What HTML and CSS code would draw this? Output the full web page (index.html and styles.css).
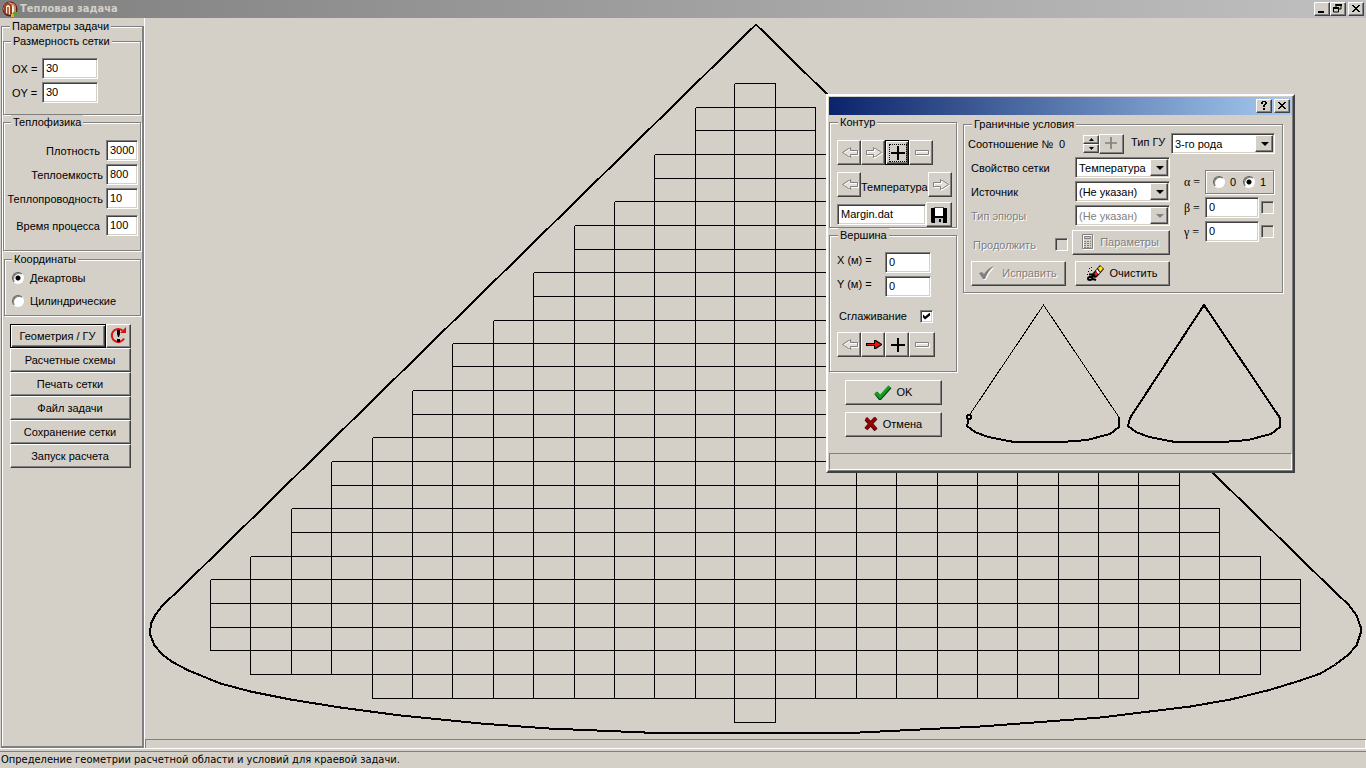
FILE: index.html
```html
<!DOCTYPE html>
<html lang="ru">
<head>
<meta charset="utf-8">
<title>Тепловая задача</title>
<link rel="stylesheet" href="styles.css">
</head>
<body>
<svg class="defs" aria-hidden="true">
  <defs>
    <symbol id="arrow-left" viewBox="0 0 17 12"><path class="etch-light" d="M8.500 1.500V4.500H16.500V8.500H8.500V10.500L1.500 6.500Z"/><path class="etch-dark" d="M8.500 .5L7.500 1.500H6.500L.5 5.500L6.500 9.500H7.500L8.500 10.500V7.500H15.500V3.500H8.500Z"/></symbol>
    <symbol id="arrow-right" viewBox="0 0 17 12"><path class="etch-light" d="M8.500 1.500V4.500H1.500V8.500H8.500V11.500L16.500 6.500Z"/><path class="etch-dark" d="M7.500 .5L8.500 1.500H9.500L15.500 5.500L9.500 9.500H8.500L7.500 10.500V7.500H.5V3.500H7.500Z"/></symbol>
    <symbol id="plus" viewBox="0 0 14 14"><path d="M6 0h2v6h6v2H8v6H6V8H0V6h6z"/></symbol>
    <symbol id="minus" viewBox="0 0 15 6"><path class="etch-light" d="M1.500 1.500H14.500V5.500H1.500Z"/><path class="etch-dark" d="M.5 .5H13.500V4.500H.5Z"/></symbol>
    <symbol id="close" viewBox="0 0 8 7"><path d="M0 0h2v1h1v1h2V1h1V0h2v1H7v1H6v1H5v1h1v1h1v1h1v1H6V6H5V5H3v1H2v1H0V6h1V5h1V4h1V3H2V2H1V1H0z"/></symbol>
  </defs>
</svg>

<header class="titlebar">
  <svg class="app-icon" viewBox="0 0 16 16" aria-hidden="true"><circle cx="8" cy="8" r="7.500" fill="#6b1a10"/><circle cx="7.500" cy="7.500" r="6" fill="#f5e8dc"/><path d="M3 12V6q0-3 3-3t3 3v7" fill="none" stroke="#9b3b22" stroke-width="2"/><path d="M6 6v7" stroke="#b06a40" stroke-width="2"/><path d="M9 3q4 0 4 4v4" fill="none" stroke="#c08a60" stroke-width="2"/><rect x="11" y="11" width="4" height="4" fill="#5aa03c"/><rect x="9" y="13" width="3" height="3" fill="#e0b020"/></svg>
  <h1 class="title-text">Тепловая задача</h1>
  <div class="window-buttons">
    <button class="caption-btn" aria-label="Свернуть"><svg width="8" height="8" viewBox="0 0 8 8"><path d="M0 6h6v2H0z"/></svg></button>
    <button class="caption-btn" aria-label="Восстановить"><svg width="9" height="9" viewBox="0 0 9 9"><path d="M3 1h5v4H6M3 0v3M.5 4h5v4h-5z" fill="none" stroke="#000"/><path d="M2.500 0H9v2H2.500zM0 3h6v2H0z"/></svg></button>
    <button class="caption-btn caption-close" aria-label="Закрыть"><svg width="8" height="7"><use href="#close"/></svg></button>
  </div>
</header>

<div class="workspace">
  <aside class="sidebar">
    <fieldset class="group params">
      <legend>Параметры задачи</legend>
      <fieldset class="group grid-size">
        <legend>Размерность сетки</legend>
        <div class="axis"><label for="ox">OX =</label><input id="ox" class="box" value="30"></div>
        <div class="axis"><label for="oy">OY =</label><input id="oy" class="box" value="30"></div>
      </fieldset>
      <fieldset class="group physics">
        <legend>Теплофизика</legend>
        <div class="prop"><label for="dens">Плотность&nbsp;</label><input id="dens" class="box" value="3000"></div>
        <div class="prop"><label for="cap">Теплоемкость</label><input id="cap" class="box" value="800"></div>
        <div class="prop"><label for="cond">Теплопроводность</label><input id="cond" class="box" value="10"></div>
        <div class="prop prop-time"><label for="time">Время процесса&nbsp;</label><input id="time" class="box" value="100"></div>
      </fieldset>
      <fieldset class="group coords">
        <legend>Координаты</legend>
        <label class="radio-row"><input type="radio" name="coord" class="radio" checked>Декартовы</label>
        <label class="radio-row"><input type="radio" name="coord" class="radio">Цилиндрические</label>
      </fieldset>
      <div class="commands">
        <div class="command-pair">
          <button class="btn btn-default">Геометрия / ГУ</button>
          <button class="btn refresh" aria-label="Обновить"><svg width="17" height="17" viewBox="0 0 17 17"><path d="M12.500 3.500A6.500 6.500 0 1 0 14 11.500" fill="none" stroke="#e01010" stroke-width="2"/><path d="M10 6h6V0z" fill="#e01010"/><path d="M7 3h3v4L9 10H8L7 7zM7 12h3v3H7z"/></svg></button>
        </div>
        <button class="btn">Расчетные схемы</button>
        <button class="btn">Печать сетки</button>
        <button class="btn">Файл задачи</button>
        <button class="btn">Сохранение сетки</button>
        <button class="btn">Запуск расчета</button>
      </div>
    </fieldset>
  </aside>

  <main class="main">
    <svg class="mesh" viewBox="144.500 17.500 1221 721" preserveAspectRatio="none" role="img" aria-label="Расчетная сетка">
      <path class="mesh-line" d="M210 579V650M250 556V674M291 508V674M331 461V674M372 437V698M412 390V698M452 343V698M493 320V698M533 272V698M574 225V698M614 201V698M654 154V698M695 107V698M734 83V722M775 83V722M815 107V698M856 154V698M896 201V698M937 225V698M977 272V698M1017 320V698M1058 343V698M1098 390V698M1138 437V698M1179 461V674M1219 508V674M1260 556V674M1300 579V650"/>
      <path class="mesh-line" d="M734 83H775M695 107H815M695 130H815M654 154H856M654 178H856M614 201H896M574 225H937M574 249H937M533 272H977M533 296H977M493 320H1017M452 343H1058M452 366H1058M412 390H1098M412 414H1098M372 437H1138M331 461H1179M331 485H1179M291 508H1219M291 532H1219M250 556H1260M210 579H1300M210 603H1300M210 627H1300M210 650H1300M250 674H1260M372 698H1138M734 722H775"/>
      <path class="contour" d="M755.500 24L270 500L180 588L162 605L155 614L151 622L149.500 630L150 635L154 645L162 654L171 661L188 670L220 683L250 691L290 699L340 707L400 715L480 723L548 728L656 732.500H850L980 726L1060 720L1100 717L1190 706L1230 699L1267 690L1300 680L1320 673L1335 664L1347 655L1356 645L1360 633V626L1356 615L1348 604L1337 594L1213 473L755.500 24"/>
    </svg>
    <div class="canvas-panel"></div>
  </main>
</div>

<footer class="status">Определение геометрии расчетной области и условий для краевой задачи.</footer>

<section class="dialog" role="dialog" aria-label="Граничные условия">
  <header class="dialog-title">
    <button class="caption-btn" aria-label="Справка"><svg width="8" height="9" viewBox="0 0 8 9"><path d="M1 1h1V0h4v1h1v2H6v1H5v2H3V4h1V3h1V1H3v2H1zM3 7h2v2H3z"/></svg></button>
    <button class="caption-btn caption-close" aria-label="Закрыть"><svg width="8" height="7"><use href="#close"/></svg></button>
  </header>
  <div class="dialog-body">
    <div class="col-left">
      <fieldset class="group contour-group">
        <legend>Контур</legend>
        <div class="tools">
          <button class="btn tool" disabled aria-label="Назад"><svg width="17" height="12"><use href="#arrow-left"/></svg></button>
          <button class="btn tool" disabled aria-label="Вперед"><svg width="17" height="12"><use href="#arrow-right"/></svg></button>
          <button class="btn tool btn-default focused" aria-label="Добавить"><svg width="14" height="14"><use href="#plus"/></svg></button>
          <button class="btn tool" disabled aria-label="Удалить"><svg width="15" height="6"><use href="#minus"/></svg></button>
        </div>
        <div class="field-nav">
          <button class="btn tool" disabled aria-label="Предыдущее"><svg width="17" height="12"><use href="#arrow-left"/></svg></button>
          <span class="field-name">Температура</span>
          <button class="btn tool" disabled aria-label="Следующее"><svg width="17" height="12"><use href="#arrow-right"/></svg></button>
        </div>
        <div class="file-row">
          <input class="box" aria-label="Файл" value="Margin.dat">
          <button class="btn tool tool-wide" aria-label="Сохранить"><svg width="16" height="16" viewBox="0 0 16 16"><path d="M0 1h16v15H1L0 15z"/><path d="M4 1h8v8H4z" fill="#fff"/><path d="M3 0h10v1H3z" fill="#e02020"/><path d="M4 11h8v5H4z" fill="#c0c0c0"/><path d="M8 12h2v3H8z"/></svg></button>
        </div>
      </fieldset>
      <fieldset class="group vertex-group">
        <legend>Вершина</legend>
        <div class="vertex"><label for="vx">X (м) =</label><input id="vx" class="box" value="0"></div>
        <div class="vertex"><label for="vy">Y (м) =</label><input id="vy" class="box" value="0"></div>
        <label class="smooth">Сглаживание<input type="checkbox" class="check" checked></label>
        <div class="tools">
          <button class="btn tool" disabled aria-label="Назад"><svg width="17" height="12"><use href="#arrow-left"/></svg></button>
          <button class="btn tool" aria-label="Вперед"><svg width="17" height="12" viewBox="0 0 17 12"><path d="M0 4h8V1h2l6 4v1l-6 4H8V7H0z"/><path d="M1 5h8V2l6 3.500L9 9V6H1z" fill="#f01010"/></svg></button>
          <button class="btn tool" aria-label="Добавить"><svg width="14" height="14"><use href="#plus"/></svg></button>
          <button class="btn tool tool-wide" disabled aria-label="Удалить"><svg width="15" height="6"><use href="#minus"/></svg></button>
        </div>
      </fieldset>
      <div class="answers">
        <button class="btn answer"><svg width="18" height="15" viewBox="0 0 18 15"><path d="M2 8L6 13L16 2" fill="none" stroke="#003c14" stroke-width="4"/><path d="M1.500 7.500L6 12L15.500 1.500" fill="none" stroke="#12a020" stroke-width="3"/></svg>OK</button>
        <button class="btn answer"><svg width="14" height="14" viewBox="0 0 14 14"><path d="M2 2Q7 7 12 13M12 1Q7 6 2 12" fill="none" stroke="#500000" stroke-width="4"/><path d="M2 1Q7 6 12 12M12 1Q6 6 2 12" fill="none" stroke="#900408" stroke-width="3"/></svg>Отмена</button>
      </div>
    </div>

    <div class="col-right">
      <fieldset class="group boundary">
        <legend>Граничные условия</legend>
        <div class="ratio-row">
          <span class="ratio-label">Соотношение №</span><output class="ratio-value">0</output>
          <span class="spinner">
            <button class="btn spin" aria-label="Больше"><svg width="5" height="3" viewBox="0 0 5 3"><path d="M0 3h5L2.500 0z"/></svg></button>
            <button class="btn spin" aria-label="Меньше"><svg width="5" height="3" viewBox="0 0 5 3"><path d="M0 0h5L2.500 3z"/></svg></button>
          </span>
          <button class="btn add" disabled aria-label="Добавить"><svg class="gray" width="12" height="12"><use href="#plus"/></svg></button>
          <label class="type-label" for="bc">Тип ГУ</label>
          <span class="combo"><select id="bc"><option>3-го рода</option></select></span>
        </div>
        <div class="boundary-cols">
          <div class="sources">
            <div class="source"><label for="gridprop">Свойство сетки</label><span class="combo"><select id="gridprop"><option>Температура</option></select></span></div>
            <div class="source"><label for="src">Источник</label><span class="combo"><select id="src"><option>(Не указан)</option></select></span></div>
            <div class="source"><label class="off" for="epure">Тип эпюры</label><span class="combo combo-off"><select id="epure" disabled><option>(Не указан)</option></select></span></div>
            <div class="continue-row">
              <label class="off continue">Продолжить<input type="checkbox" class="check check-off" disabled></label>
              <button class="btn" disabled><svg width="12" height="16" viewBox="0 0 12 16"><path d="M1.500 1.500H11.500V15.500H1.500Z" fill="none" stroke="#fff"/><path d="M.5 .5H10.500V14.500H.5ZM2.500 2.500H8.500V4.500H2.500Z" fill="none" stroke="#808080"/><path d="M2 7h2v1H2zM5 7h2v1H5zM8 7h1v1H8zM2 9h2v1H2zM5 9h2v1H5zM8 9h1v1H8zM2 11h2v1H2zM5 11h2v1H5zM8 11h1v1H8zM2 13h2v1H2zM5 13h2v1H5zM8 13h1v1H8z" fill="#808080"/></svg>Параметры</button>
            </div>
            <div class="edit-row">
              <button class="btn" disabled><svg width="17" height="14" viewBox="0 0 17 14"><path d="M1 8L4 7L6 9Q10 3 16 1Q10 6 7 14H5Z" fill="#fff"/><path d="M0 7L3 6L5 8Q9 2 15 0Q9 5 6 13H4Z" fill="#808080"/></svg>Исправить</button>
              <button class="btn"><svg width="17" height="16" viewBox="0 0 17 16"><path d="M6 8L13 0L17 4L10 12L8 13L5 11Z"/><path d="M11 3L14 1L16 4L13 7Z" fill="#ffe020"/><path d="M10 4L13 8L11 9L9 6Z" fill="#fff"/><path d="M9 6L11 9L9 11L7 9Z" fill="#f01818"/><path d="M2 3h1v1H2zM4 2h1v1H4zM1 6h1v1H1zM4 5h1v1H4zM0 9h1v1H0z"/><path d="M2 9.500H5.500V15M5 12H3Q1 12 1 13.500T3 15L6 14L9 15" fill="none" stroke="#000" stroke-width="2"/></svg>Очистить</button>
            </div>
          </div>
          <div class="coeffs">
            <div class="coeff"><span class="greek">α =</span>
              <span class="alpha"><label><input type="radio" name="alpha" class="radio">0</label><label><input type="radio" name="alpha" class="radio" checked>1</label></span></div>
            <div class="coeff"><label class="greek" for="beta">β =</label><input id="beta" class="box" value="0"><input type="checkbox" class="check check-off" aria-label="β переменная"></div>
            <div class="coeff"><label class="greek" for="gamma">γ =</label><input id="gamma" class="box" value="0"><input type="checkbox" class="check check-off" aria-label="γ переменная"></div>
          </div>
        </div>
      </fieldset>
      <div class="previews">
        <svg viewBox="0 0 158 144" aria-label="Контур"><path class="thin" d="M5.500 114L79.500 4L155.500 117"/><path class="thick" d="M5 117L3 125L11 131L24 136L50 141H98L123 139L146 133L155 126V116"/><circle class="node" cx="5" cy="116" r="2"/></svg>
        <svg viewBox="0 0 158 144" aria-label="Область"><path class="thick" d="M79 4L5 117L3 125L11 131L24 136L50 141H98L123 139L146 133L155 126V117Z"/></svg>
      </div>
    </div>
  </div>
  <footer class="dialog-status"></footer>
</section>
</body>
</html>
```
FILE: styles.css
```css
* { box-sizing: border-box; }

body {
  margin: 0;
  min-height: 100vh;
  display: flex;
  flex-direction: column;
  position: relative;
  background: #d4d0c8;
  color: #000;
  font: 11px/14px "Liberation Sans", Arial, sans-serif;
  overflow: hidden;
}

button, input, select { font: inherit; color: inherit; margin: 0; }
svg { flex: none; }
.defs { position: absolute; width: 0; height: 0; }
.etch-light { fill: #e4e0d8; stroke: #fff; }
.etch-dark { fill: none; stroke: #808080; }

/* Window caption */
.titlebar {
  display: flex;
  align-items: center;
  height: 18px;
  padding: 0 2px;
  gap: 2px;
  background: linear-gradient(90deg, #808080, #c0c0c0);
}
.app-icon { width: 16px; height: 16px; }
.title-text {
  flex: 1;
  margin: 0;
  color: #d4d0c8;
  font: bold 11px/14px "DejaVu Sans Condensed", "DejaVu Sans", sans-serif;
}
.window-buttons { display: flex; }
.caption-btn {
  display: flex;
  align-items: center;
  justify-content: center;
  width: 16px;
  height: 14px;
  padding: 0 1px 1px 0;
  background: #d4d0c8;
  border: 1px solid;
  border-color: #fff #404040 #404040 #fff;
  box-shadow: inset -1px -1px 0 #808080;
}
.caption-close { margin-left: 2px; }

/* Shared controls */
.group {
  min-width: 0;
  margin: 0;
  padding: 0;
  border: 1px solid #808080;
  box-shadow: 1px 1px 0 #fff, inset 1px 1px 0 #fff;
}
.group > legend {
  margin-left: 7px;
  padding: 0 2px;
  background: #d4d0c8;
}
.box {
  width: 100%;
  min-width: 0;
  height: 21px;
  padding: 0 3px 2px;
  background: #fff;
  border: 1px solid;
  border-color: #808080 #fff #fff #808080;
  border-radius: 0;
  box-shadow: inset 1px 1px 0 #404040, inset -1px -1px 0 #d4d0c8;
  outline: 0;
}
.btn {
  display: flex;
  align-items: center;
  justify-content: center;
  height: 25px;
  padding: 0 1px 1px 0;
  white-space: nowrap;
  background: #d4d0c8;
  border: 1px solid;
  border-color: #fff #404040 #404040 #fff;
  border-radius: 0;
  box-shadow: inset -1px -1px 0 #808080;
}
.btn:disabled, .off { color: #808080; text-shadow: 1px 1px 0 #fff; }
.btn-default {
  border-color: #000;
  box-shadow: inset 1px 1px 0 #fff, inset -1px -1px 0 #404040, inset -2px -2px 0 #808080;
}
.radio {
  appearance: none;
  width: 12px;
  height: 12px;
  border: 1px solid;
  border-color: #606060 #fff #fff #606060;
  border-radius: 50%;
  background: #fff;
  box-shadow: inset 1px 1px 0 #808080;
}
.radio:checked { background: radial-gradient(circle, #000 2px, #fff 3px); }
.check {
  appearance: none;
  display: grid;
  place-items: center;
  width: 13px;
  height: 13px;
  background: #fff;
  border: 1px solid;
  border-color: #808080 #fff #fff #808080;
  box-shadow: inset 1px 1px 0 #404040, inset -1px -1px 0 #d4d0c8;
}
.check:checked::before {
  content: "";
  width: 7px;
  height: 7px;
  background: #000;
  clip-path: polygon(0 30%, 30% 58%, 100% 0, 100% 42%, 30% 100%, 0 72%);
}
.check-off { background: #d4d0c8; }
.combo { display: grid; min-width: 0; height: 21px; }
.combo::before, .combo::after { content: ""; grid-area: 1 / 1; z-index: 1; pointer-events: none; }
.combo::before {
  justify-self: end;
  width: 16px;
  margin: 2px;
  background: #d4d0c8;
  border: 1px solid;
  border-color: #fff #404040 #404040 #fff;
  box-shadow: inset -1px -1px 0 #808080;
}
.combo::after {
  place-self: center end;
  margin-right: 6px;
  border: solid transparent;
  border-width: 4px 4px 0;
  border-top-color: #000;
}
.combo-off::after { border-top-color: #808080; }
.combo select {
  grid-area: 1 / 1;
  appearance: none;
  width: 100%;
  min-width: 0;
  padding: 0 18px 0 3px;
  background: #fff;
  border: 1px solid;
  border-color: #808080 #fff #fff #808080;
  border-radius: 0;
  box-shadow: inset 1px 1px 0 #404040, inset -1px -1px 0 #d4d0c8;
  outline: 0;
}
.combo select:disabled { color: #808080; opacity: 1; }

/* Workspace */
.workspace { flex: 1; display: flex; border-bottom: 1px solid #fff; }
.sidebar { display: flex; flex: none; width: 144px; padding: 1px 0 0 1px; }
.params { flex: 1; padding: 1px 1px 0; border-width: 1px 2px 2px 1px; box-shadow: inset 1px 1px 0 #fff; }

.grid-size { padding: 10px 0 11px; }
.axis { display: grid; grid-template-columns: 30px 56px; align-items: center; padding-left: 8px; }
.axis + .axis, .prop + .prop { margin-top: 3px; }
.physics { padding: 11px 2px 14px 0; }
.prop { display: grid; grid-template-columns: 1fr 32px; gap: 3px; align-items: center; text-align: right; white-space: nowrap; }
.physics .prop-time { margin-top: 6px; }
.coords { margin: 1px 0 0 1px; padding: 4px 0 6px 7px; }
.coords > legend { margin-left: 0; }
.radio-row { display: flex; align-items: center; gap: 6px; height: 16px; }
.radio-row + .radio-row { margin-top: 7px; }

.commands { padding: 8px 10px 0 7px; }
.commands .btn { width: 100%; height: 24px; }
.command-pair { display: grid; grid-template-columns: 1fr 25px; }

.main { flex: 1; display: flex; flex-direction: column; min-width: 0; border-left: 1px solid #fff; }
.mesh { flex: 1; min-height: 0; width: 100%; display: block; }
.mesh-line, .contour { fill: none; stroke: #000; vector-effect: non-scaling-stroke; shape-rendering: crispEdges; }
.contour { stroke-width: 2; }
.canvas-panel { height: 9px; border: solid #808080; border-width: 1px 0 0 1px; box-shadow: inset -1px 0 0 #fff; }

.status {
  height: 17px;
  margin-top: 2px;
  padding-left: 1px;
  border-top: 1px solid #808080;
  font: 11px/16px "DejaVu Sans Condensed", "DejaVu Sans", sans-serif;
}

/* Floating dialog */
.dialog {
  position: absolute;
  top: 94px;
  right: 71px;
  width: 469px;
  padding: 1px;
  background: #d4d0c8;
  border: 2px solid;
  border-color: #fff #404040 #404040 #fff;
  box-shadow: inset -1px -1px 0 #808080;
}
.dialog-title {
  display: flex;
  align-items: center;
  justify-content: flex-end;
  height: 18px;
  padding-right: 2px;
  background: linear-gradient(90deg, #0a246a, #a6caf0);
}
.dialog-body { display: flex; gap: 6px; padding-right: 9px; }
.dialog-status { height: 17px; border: 1px solid; border-color: #808080 #fff #fff #808080; }

.col-left { flex: none; width: 128px; padding-bottom: 16px; }
.contour-group { padding: 11px 4px 0 7px; }
.contour-group > legend, .vertex-group > legend { margin-left: 1px; }
.tools { display: flex; }
.tool { flex: none; width: 24px; padding: 1px 0 0 2px; }
.tool-wide { width: 26px; padding-left: 0; }
.focused svg { outline: 1px dotted #000; outline-offset: 1px; }
.field-nav { display: flex; align-items: center; margin: 7px 0 5px; }
.field-name { flex: 1; min-width: 0; white-space: nowrap; padding-top: 4px; }
.file-row { display: flex; align-items: center; }

.vertex-group { padding: 10px 7px 14px; }
.vertex { display: grid; grid-template-columns: 48px 46px; line-height: 16px; }
.vertex + .vertex { margin-top: 3px; }
.smooth { display: flex; justify-content: space-between; align-items: center; height: 14px; margin: 12px 16px 9px 2px; }

.answers { display: grid; gap: 7px; padding: 8px 15px 0 16px; }
.answer { gap: 5px; }

.col-right { flex: 1; min-width: 0; padding-top: 2px; }
.boundary { padding: 2px 7px 6px 4px; }
.boundary > legend { margin-left: 4px; }
.ratio-row { display: flex; align-items: center; height: 21px; }
.ratio-label { width: 91px; white-space: nowrap; }
.ratio-value { width: 24px; }
.spinner { display: grid; width: 16px; }
.spin { width: 16px; height: 9px; padding: 0; }
.add { width: 25px; height: 20px; }
.gray { fill: #808080; }
.type-label { width: 47px; padding: 0 0 3px 7px; white-space: nowrap; }
.ratio-row .combo { flex: 1; }
.boundary-cols { display: flex; justify-content: space-between; padding-top: 3px; }
.sources { width: 202px; padding-left: 3px; }
.source { display: grid; grid-template-columns: 1fr 95px; align-items: center; margin-bottom: 3px; }
.continue-row { display: grid; grid-template-columns: 1fr 98px; gap: 4px; padding-top: 1px; }
.continue { display: flex; align-items: center; justify-content: space-between; padding: 4px 0 0 2px; }
.sources .btn { gap: 6px; }
.edit-row { display: grid; grid-template-columns: 1fr 1fr; gap: 9px; margin-top: 6px; }
.coeffs { display: grid; align-content: start; gap: 3px; padding: 13px 1px 0 0; }
.coeff { display: grid; grid-template-columns: 22px 54px 15px; align-items: center; justify-items: end; }
.greek { justify-self: start; padding-left: 1px; font: 12px/14px "Liberation Serif", serif; }
.alpha {
  grid-column: 2 / 4;
  justify-self: stretch;
  display: flex;
  justify-content: space-evenly;
  height: 24px;
  border: 1px solid #808080;
  box-shadow: 1px 1px 0 #fff, inset 1px 1px 0 #fff;
}
.alpha label { display: flex; align-items: center; gap: 5px; }

.previews { display: grid; grid-template-columns: 158px 158px; gap: 3px; padding: 8px 0 0 1px; }
.previews svg { width: 100%; display: block; }
.thin, .thick, .node { fill: none; stroke: #000; shape-rendering: crispEdges; }
.thick, .node { stroke-width: 2; }
```
